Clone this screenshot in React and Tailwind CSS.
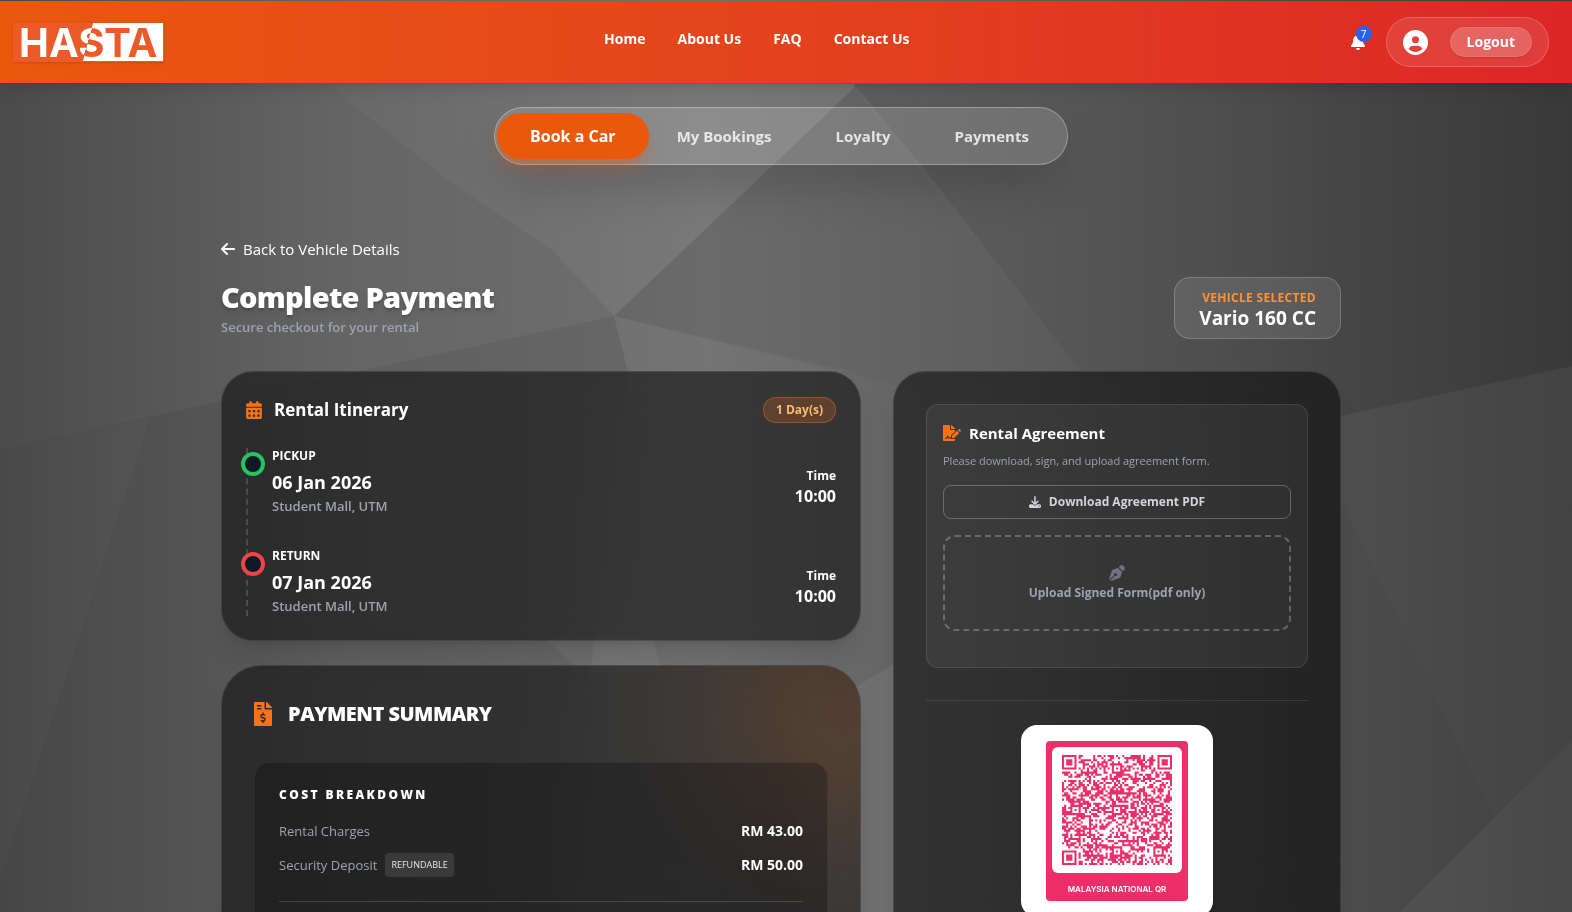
import React from 'react';
import { FaArrowLeft, FaBell, FaCalendarDays, FaCircleUser, FaDownload, FaPenNib } from 'react-icons/fa6';
import { FaFileInvoiceDollar, FaFileSignature } from 'react-icons/fa';

const NAV_LINKS = ['Home', 'About Us', 'FAQ', 'Contact Us'];
const TABS = ['Book a Car', 'My Bookings', 'Loyalty', 'Payments'];
const STOPS = [
  { label: 'PICKUP', date: '06 Jan 2026', place: 'Student Mall, UTM', time: '10:00', ring: 'border-[#22c55e]' },
  { label: 'RETURN', date: '07 Jan 2026', place: 'Student Mall, UTM', time: '10:00', ring: 'border-[#ef4444]' },
];

const QR_SIZE = 53;
const QR_ALIGN = [[26, 6], [6, 26], [26, 26], [46, 26], [26, 46], [46, 46]];

// version 9 layout: finders, alignment marks, timing lines, then data modules
const buildQr = () => {
  let seed = 90210;
  const next = () => {
    seed = (seed * 1103515245 + 12345) % 2147483648;
    return seed / 2147483648;
  };
  const finders = [[0, 0], [QR_SIZE - 7, 0], [0, QR_SIZE - 7]];
  let d = '';
  for (let y = 0; y < QR_SIZE; y++) {
    for (let x = 0; x < QR_SIZE; x++) {
      let on = next() > 0.48;
      if (x === 6) on = y % 2 === 0;
      if (y === 6) on = x % 2 === 0;
      QR_ALIGN.forEach(([ax, ay]) => {
        const r = Math.max(Math.abs(x - ax), Math.abs(y - ay));
        if (r <= 2) on = r !== 1;
      });
      finders.forEach(([fx, fy]) => {
        const r = Math.max(Math.abs(x - fx - 3), Math.abs(y - fy - 3));
        if (r <= 4) on = r === 3 || r < 2;
      });
      if (on) d += `M${x} ${y}h1v1h-1z`;
    }
  }
  return d;
};
const QR_PATH = buildQr();

const Logo = () => (
  <svg viewBox="0 0 151 39" className="h-[39px] w-[151px] overflow-visible shadow-sm" role="img" aria-label="HASTA">
    <defs>
      <linearGradient id="split" gradientUnits="userSpaceOnUse" x1="70" y1="17" x2="80" y2="20">
        <stop offset="0.5" stopColor="#ffffff" />
        <stop offset="0.5" stopColor="#ec5a29" />
      </linearGradient>
    </defs>
    <rect width="151" height="39" fill="#ec5a29" />
    <path d="M80 0H150V38H70Z" fill="#ffffff" />
    <text x="6" y="34" fontFamily="Inter, sans-serif" fontWeight="700" fontSize="40" fill="url(#split)">
      HASTA
    </text>
  </svg>
);

const Backdrop = () => (
  <svg
    className="fixed inset-0 -z-10 h-full w-full"
    viewBox="0 0 1572 912"
    preserveAspectRatio="none"
    aria-hidden="true"
  >
    <defs>
      <linearGradient id="base" x1="0" y1="0" x2="1" y2="0">
        <stop offset="0" stopColor="#4b4b4b" />
        <stop offset="0.22" stopColor="#656565" />
        <stop offset="0.45" stopColor="#707070" />
        <stop offset="0.65" stopColor="#5e5e5e" />
        <stop offset="0.85" stopColor="#464646" />
        <stop offset="1" stopColor="#393939" />
      </linearGradient>
      <linearGradient id="beam" x1="0" y1="0" x2="1" y2="0">
        <stop offset="0" stopColor="#fff" stopOpacity="0.02" />
        <stop offset="1" stopColor="#fff" stopOpacity="0.08" />
      </linearGradient>
      <linearGradient id="shade" x1="0" y1="0" x2="1" y2="0">
        <stop offset="0" stopColor="#000" stopOpacity="0.06" />
        <stop offset="1" stopColor="#000" stopOpacity="0" />
      </linearGradient>
      <linearGradient id="ridge" x1="0" y1="0" x2="0.6" y2="0">
        <stop offset="0" stopColor="#000" stopOpacity="0.1" />
        <stop offset="1" stopColor="#000" stopOpacity="0" />
      </linearGradient>
    </defs>
    <rect width="1572" height="912" fill="url(#base)" />
    <path d="M327 84L461 190L552 250L614 316L854 88V84Z" fill="url(#beam)" />
    <path d="M854 88L614 316L898 386L1090 384Z" fill="url(#shade)" />
    <path d="M854 84L925 170L1090 384L1572 330V84Z" fill="url(#ridge)" />
    <path d="M0 450L235 398L614 316L628 372L560 912H0Z" fill="#000" opacity="0.06" />
    <path d="M614 316L628 372H852Z" fill="#fff" opacity="0.03" />
    <path d="M150 418L0 880V450Z" fill="#fff" opacity="0.02" />
    <path d="M652 636L662 672H580L543 636Z" fill="#fff" opacity="0.05" />
    <path d="M800 720L894 664V912H800Z" fill="#fff" opacity="0.06" />
    <path d="M1340 416L1572 366V740L1494 818L1340 500Z" fill="#fff" opacity="0.05" />
    <path d="M1340 500L1494 818L1400 912H1340Z" fill="#fff" opacity="0.04" />
    <path d="M1494 818L1572 740V912H1400Z" fill="#fff" opacity="0.08" />
  </svg>
);

const Header = () => (
  <header className="mt-px flex h-[82px] items-center justify-between bg-gradient-to-r from-[#ea580c] to-[#dc2626] pr-[23px] pl-[13px] shadow-lg">
    <a href="#home">
      <Logo />
    </a>
    <nav className="flex gap-8 pb-1.5 text-sm font-bold text-white">
      {NAV_LINKS.map((link) => (
        <a key={link} href="#nav">
          {link}
        </a>
      ))}
    </nav>
    <div className="flex items-center gap-5">
      <button type="button" aria-label="Notifications" className="relative text-white">
        <FaBell className="h-4 w-4" />
        <span className="absolute -top-2 left-1.5 flex h-4 w-4 items-center justify-center rounded-full bg-[#2563eb] text-[10px]">
          7
        </span>
      </button>
      <div className="flex h-[50px] items-center gap-[22px] rounded-full border border-white/20 bg-white/10 px-4">
        <FaCircleUser className="h-[25px] w-[25px] text-white" />
        <button
          type="button"
          className="h-[30px] rounded-full border border-white/10 bg-white/20 px-4 text-sm font-bold text-white shadow-sm"
        >
          Logout
        </button>
      </div>
    </div>
  </header>
);

const Tabs = () => (
  <nav className="mx-auto mt-6 flex h-[58px] w-fit items-center rounded-full border border-white/30 bg-white/15 pr-1.5 pl-0.5 shadow-2xl">
    {TABS.map((tab, i) => (
      <a
        key={tab}
        href="#tab"
        className={
          i === 0
            ? '-mr-1 rounded-full bg-[#ea580c] px-[33px] py-[11px] font-bold text-white shadow-lg shadow-[#ea580c]/40'
            : 'px-8 py-[11px] text-[15px] font-bold text-white/80'
        }
      >
        {tab}
      </a>
    ))}
  </nav>
);

const Itinerary = () => (
  <section className="rounded-[32px] border border-white/10 bg-black/50 p-6 shadow-xl backdrop-blur-xl">
    <div className="flex items-center justify-between">
      <h2 className="flex items-center gap-3 text-[17px] leading-7 font-bold">
        <FaCalendarDays className="h-[18px] w-4 text-[#f97316]" />
        Rental Itinerary
      </h2>
      <span className="rounded-full border border-[#f97316]/40 bg-[#f97316]/20 px-3 py-1 text-xs font-bold text-[#fdba74]">
        1 Day(s)
      </span>
    </div>
    <ol className="relative mt-6 flex flex-col gap-8">
      <span className="absolute top-0 bottom-0 left-0 border-l-2 border-dashed border-white/15" />
      {STOPS.map((stop) => (
        <li key={stop.label} className="relative flex items-center justify-between pl-[26px]">
          <span className={`absolute top-1 -left-[5px] h-6 w-6 rounded-full border-4 bg-[#111827] ${stop.ring}`} />
          <div>
            <p className="text-xs leading-4 font-bold">{stop.label}</p>
            <p className="mt-1 text-lg leading-7 font-bold">{stop.date}</p>
            <p className="text-[13px] leading-5 font-semibold text-[#9ca3af]">{stop.place}</p>
          </div>
          <div className="mt-3 text-right">
            <p className="text-xs leading-4 font-bold">Time</p>
            <p className="leading-6 font-bold">{stop.time}</p>
          </div>
        </li>
      ))}
    </ol>
  </section>
);

const Summary = () => (
  <section className="relative overflow-hidden rounded-[40px] border border-white/10 bg-black/50 p-8 pt-9 shadow-xl backdrop-blur-xl">
    <div className="absolute -top-20 -right-28 h-64 w-64 rounded-full bg-[#f97316]/15 blur-3xl" />
    <h2 className="relative flex items-center gap-4 text-xl leading-6 font-extrabold tracking-tight">
      <FaFileInvoiceDollar className="h-6 w-[18px] text-[#f97316]" />
      PAYMENT SUMMARY
    </h2>
    <div className="relative mt-9 rounded-2xl border border-white/5 bg-black/25 p-6 pb-16">
      <h3 className="text-xs leading-4 font-extrabold tracking-[0.2em]">COST BREAKDOWN</h3>
      <dl className="mt-4 text-sm">
        <div className="flex h-6 items-center justify-between">
          <dt className="text-[13px] text-[#9ca3af]">Rental Charges</dt>
          <dd className="font-bold">RM 43.00</dd>
        </div>
        <div className="mt-2.5 flex h-6 items-center justify-between">
          <dt className="flex items-center gap-2 text-[13px] text-[#9ca3af]">
            Security Deposit
            <span className="rounded bg-white/10 px-1.5 py-1 text-[9px] leading-4 text-gray-200">REFUNDABLE</span>
          </dt>
          <dd className="font-bold">RM 50.00</dd>
        </div>
      </dl>
      <hr className="mt-6 border-white/15" />
    </div>
  </section>
);

const Agreement = () => (
  <div className="rounded-xl border border-white/10 bg-white/5 p-4 pb-9">
    <h3 className="flex items-center gap-2 text-[15px] leading-6 font-bold">
      <FaFileSignature className="h-4 w-[18px] text-[#f97316]" />
      Rental Agreement
    </h3>
    <p className="mt-2 text-[11px] leading-4 text-[#9ca3af]">Please download, sign, and upload agreement form.</p>
    <button
      type="button"
      className="mt-4 flex h-[34px] w-full items-center justify-center gap-2 rounded-lg border border-white/25 text-xs font-bold text-[#d1d5db]"
    >
      <FaDownload className="h-3 w-3" />
      Download Agreement PDF
    </button>
    <label className="mt-4 flex h-24 cursor-pointer flex-col items-center justify-center gap-1 rounded-xl border-2 border-dashed border-white/25 text-xs font-bold text-[#9ca3af]">
      <FaPenNib className="h-4 w-4 text-[#6b7280]" />
      Upload Signed Form(pdf only)
      <input type="file" accept="application/pdf" className="sr-only" />
    </label>
  </div>
);

const QrCard = () => (
  <div className="mx-auto mt-6 w-48 rounded-2xl bg-white px-[25px] py-4 shadow-lg">
    <div className="rounded bg-[#ed2f69] p-1.5 pb-0">
      <div className="rounded-md bg-white px-2.5 py-2">
        <svg viewBox="0 0 53 53" className="block w-full" role="img" aria-label="Payment QR code">
          <path d={QR_PATH} fill="#ed2f69" />
        </svg>
      </div>
      <p className="pt-2 pb-1 text-center font-[Inter] text-[8px] leading-4 font-semibold text-white">
        MALAYSIA NATIONAL QR
      </p>
    </div>
  </div>
);

const App = () => {
  return (
    <div className="isolate h-screen overflow-hidden bg-[#4a4a4a] font-['Open_Sans','Noto_Sans',sans-serif] text-white">
      <Backdrop />
      <Header />
      <div className="pr-2.5">
        <Tabs />
        <main className="mx-auto max-w-6xl px-4 pt-[72px]">
          <a href="#vehicle" className="flex w-fit items-center gap-2 text-[15px] leading-6">
            <FaArrowLeft className="h-4 w-3.5" />
            Back to Vehicle Details
          </a>
          <div className="mt-4 flex items-center justify-between">
            <div>
              <h1 className="text-[29px] leading-9 font-extrabold tracking-tight text-shadow-lg">Complete Payment</h1>
              <p className="mt-0.5 text-[13px] leading-5 font-semibold text-[#9ca3af]">Secure checkout for your rental</p>
            </div>
            <div className="rounded-2xl border border-white/20 bg-white/10 px-6 py-2 text-right">
              <p className="mt-1 text-xs leading-4 font-bold tracking-wide text-[#fb923c]">VEHICLE SELECTED</p>
              <p className="text-[19px] leading-6 font-bold">Vario 160 CC</p>
            </div>
          </div>
          <div className="mt-8 grid grid-cols-12 items-start gap-8">
            <div className="col-span-7 flex flex-col gap-6">
              <Itinerary />
              <Summary />
            </div>
            <aside className="col-span-5 rounded-[32px] border border-white/10 bg-black/50 p-8 shadow-xl backdrop-blur-xl">
              <Agreement />
              <hr className="mt-8 border-white/10" />
              <QrCard />
            </aside>
          </div>
        </main>
      </div>
    </div>
  );
};

export default App;
